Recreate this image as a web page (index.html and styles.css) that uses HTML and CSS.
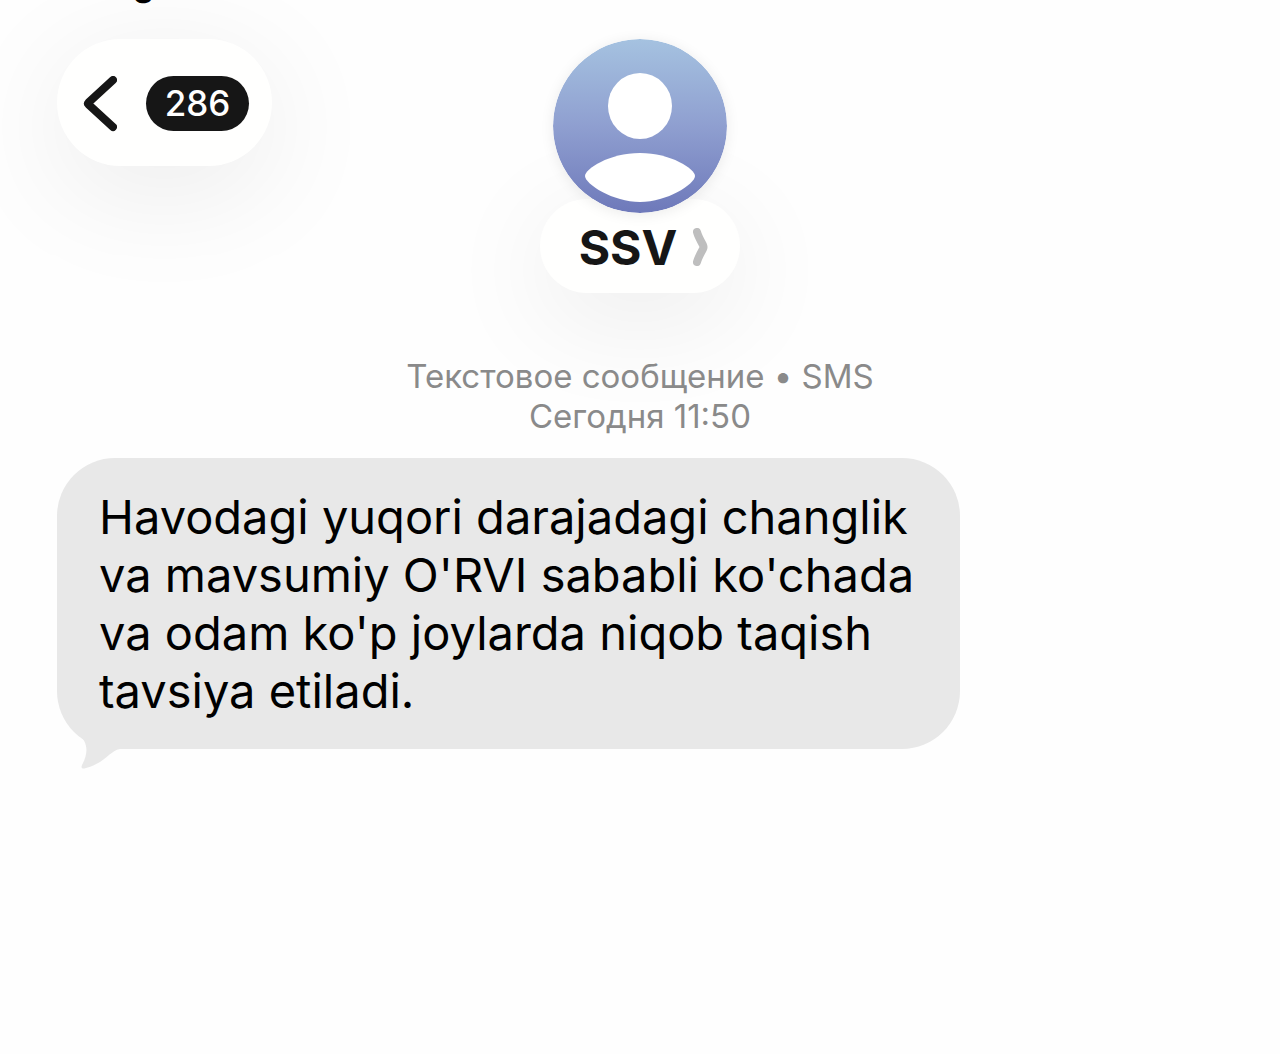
FILE: index.html
```
<!DOCTYPE html>
<html lang="uz">

<head>
  <meta charset="UTF-8">
  <meta name="viewport" content="width=device-width, initial-scale=1.0">
  <title>SSV</title>
  <link rel="stylesheet" href="styles.css">
</head>

<body>
  <div class="status-bar"><span>g</span></div>

  <header class="chat-header">
    <button class="back-btn" type="button">
      <svg class="back-icon" width="34" height="56" viewBox="0 0 34 56" aria-hidden="true">
        <path d="M30 4 L5.500 26.500 Q4.500 27.500 5.500 28.500 L30 51" />
      </svg>
      <span class="unread">286</span>
    </button>

    <div class="contact">
      <svg class="avatar" width="174" height="174" viewBox="0 0 174 174" aria-hidden="true">
        <defs>
          <linearGradient id="avatar-fill" x1="0" y1="0" x2="0" y2="1">
            <stop offset="0" stop-color="#a5c2e0" />
            <stop offset="0.500" stop-color="#8f9fd0" />
            <stop offset="1" stop-color="#6e79ba" />
          </linearGradient>
        </defs>
        <circle cx="87" cy="87" r="87" fill="url(#avatar-fill)" />
        <ellipse cx="87" cy="67" rx="32" ry="33" fill="#fff" />
        <path d="M32 137 C32 130 56 114 87 114 C118 114 142 130 142 137 C142 145 114 163 87 163 C60 163 32 145 32 137 Z" fill="#fff" />
      </svg>
      <button class="contact-btn" type="button">
        <span>SSV</span>
        <svg width="16" height="38" viewBox="0 0 16 38" aria-hidden="true">
          <path d="M4 4 Q5 8 10 17 Q11 19 10 21 Q5 30 4 34" />
        </svg>
      </button>
    </div>
  </header>

  <main class="chat">
    <p class="meta">Текстовое сообщение • SMS<br>Сегодня 11:50</p>

    <div class="bubble">
      <p>Havodagi yuqori darajadagi changlik va mavsumiy O'RVI sababli ko'chada va odam ko'p joylarda niqob taqish tavsiya etiladi.</p>
      <svg class="tail" width="70" height="50" viewBox="0 0 70 50" aria-hidden="true">
        <path d="M0 0 L3 13 C14 21 15 32 8 45 Q6 50 12 48 C33 42 35 31 46 29 L70 29 L70 0 Z" />
      </svg>
    </div>
  </main>
</body>

</html>
```

FILE: styles.css
```
* {
  box-sizing: border-box;
}

body {
  font-family: Inter, "Liberation Sans", sans-serif;
  margin: 0;
  min-height: 100vh;
  background-color: #fefefe;
  color: #000;
  overflow-x: hidden;
}

p {
  margin: 0;
}

button {
  font-family: inherit;
  border: none;
  background-color: #fffffe;
  color: #161616;
  cursor: pointer;
}

/* the status line is scrolled almost out of view */
.status-bar {
  height: 75px;
  margin-top: -36px;
  padding-left: 133px;
  font-size: 34px;
  font-weight: 600;
  line-height: 40px;
}

.chat-header {
  display: grid;
  grid-template-columns: 1fr auto 1fr;
  align-items: start;
  padding: 0 57px;
}

.back-btn {
  display: flex;
  align-items: center;
  justify-self: start;
  gap: 29px;
  height: 127px;
  padding: 2px 23px 0 26px;
  border-radius: 64px;
  box-shadow: 0 24px 120px rgba(0, 0, 0, 0.08);
}

.back-icon path {
  fill: none;
  stroke: #161616;
  stroke-width: 8;
  stroke-linecap: round;
  stroke-linejoin: round;
}

.unread {
  min-width: 103px;
  padding: 0 16px;
  border-radius: 28px;
  background-color: #161616;
  color: #fff;
  font-size: 35px;
  font-weight: 500;
  line-height: 55px;
}

.contact {
  display: flex;
  flex-direction: column;
  align-items: center;
}

.avatar {
  position: relative;
  border-radius: 50%;
  box-shadow: 0 2px 14px rgba(0, 0, 0, 0.08);
}

.contact-btn {
  display: flex;
  align-items: center;
  justify-content: center;
  gap: 16px;
  width: 200px;
  height: 94px;
  margin-top: -14px;
  padding: 2px 0 0 8px;
  border-radius: 47px;
  font-size: 48px;
  font-weight: 700;
  box-shadow: 0 24px 110px rgba(0, 0, 0, 0.08);
}

.contact-btn path {
  fill: none;
  stroke: #bebebe;
  stroke-width: 8;
  stroke-linecap: round;
  stroke-linejoin: round;
}

.chat {
  padding: 63px 57px;
}

.meta {
  color: #8a8a8a;
  font-size: 33px;
  line-height: 40px;
  text-align: center;
}

.bubble {
  position: relative;
  width: fit-content;
  max-width: 903px;
  margin-top: 22px;
  padding: 30px 42px 29px;
  border-radius: 58px;
  background-color: #e8e8e8;
  font-size: 47px;
  line-height: 58px;
}

.tail {
  position: absolute;
  left: 17px;
  bottom: -21px;
}

.tail path {
  fill: #e8e8e8;
}
```
